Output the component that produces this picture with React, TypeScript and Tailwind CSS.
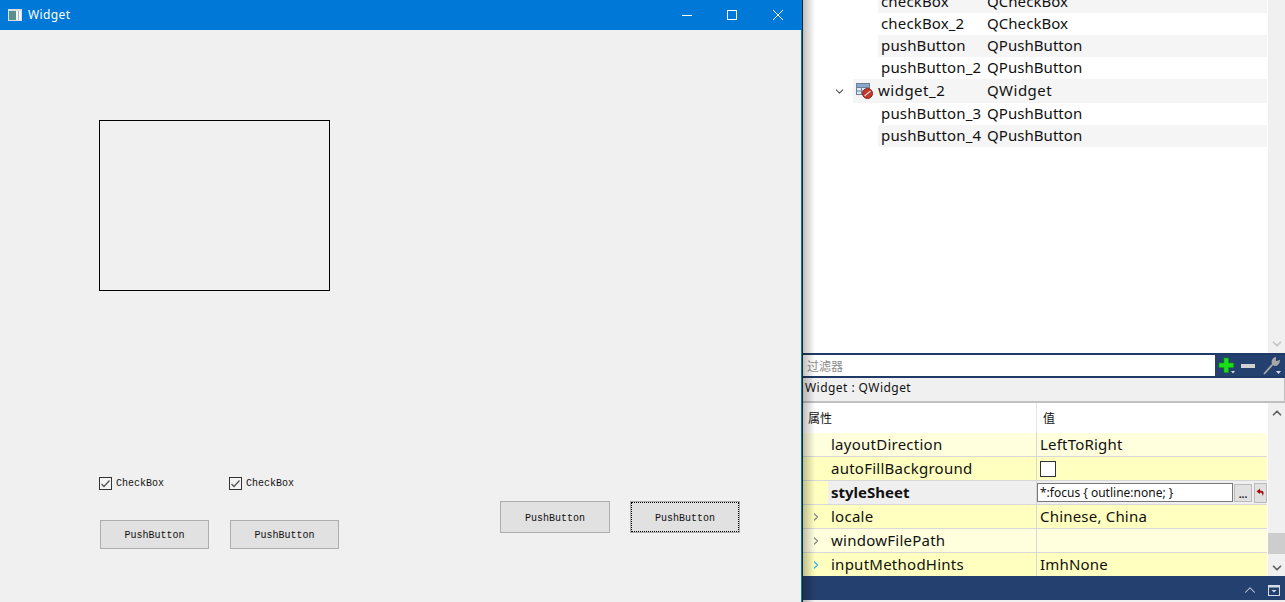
import { ChevronDown, ChevronUp, ChevronRight } from "lucide-react";

const ui = "font-['Noto_Sans','Open_Sans',sans-serif]";
const bitmap = "font-['Liberation_Mono','Noto_Sans_CJK_SC',monospace] text-[10px] text-[#111]";

function AppIcon() {
  return (
    <svg width="14" height="12" viewBox="0 0 14 12">
      <rect x="0" y="0" width="14" height="12" fill="#d9dfe3" />
      <rect x="1" y="2" width="7" height="9" fill="#5b8f8c" />
      <rect x="8" y="2" width="5" height="9" fill="#f4f8fa" />
      <rect x="10" y="2" width="1" height="9" fill="#a8b8bc" />
    </svg>
  );
}

function WindowButtons() {
  return (
    <div className="ml-auto flex">
      <div className="flex h-[30px] w-[46px] items-center justify-center">
        <svg width="10" height="10" viewBox="0 0 10 10" className="ml-[1px]">
          <path d="M0 5.5 H10" stroke="#fff" strokeWidth="1" />
        </svg>
      </div>
      <div className="flex h-[30px] w-[46px] items-center justify-center">
        <svg width="10" height="10" viewBox="0 0 10 10">
          <rect x="0.5" y="0.5" width="9" height="9" fill="none" stroke="#fff" strokeWidth="1" />
        </svg>
      </div>
      <div className="flex h-[30px] w-[46px] items-center justify-center">
        <svg width="10" height="10" viewBox="0 0 10 10">
          <path d="M0 0 L10 10 M10 0 L0 10" stroke="#fff" strokeWidth="1" />
        </svg>
      </div>
    </div>
  );
}

function QtCheck() {
  return (
    <span className="flex h-[13px] w-[13px] items-center justify-center border border-[#333] bg-[#f4f4f4]">
      <svg width="11" height="11" viewBox="0 0 11 11">
        <path d="M1.5 6 L4 8.5 L9.5 2.5" fill="none" stroke="#555" strokeWidth="1.3" />
      </svg>
    </span>
  );
}

function CheckItem() {
  return (
    <div className="flex w-[130px] items-center gap-[4px]">
      <QtCheck />
      <span className={bitmap}>CheckBox</span>
    </div>
  );
}

function PushButton({ focused, tall }: { focused?: boolean; tall?: boolean }) {
  return (
    <button
      className={`flex items-center justify-center border border-[#adadad] bg-[#e1e1e1] ${tall ? "h-[32px] w-[110px]" : "h-[29px] w-[109px]"} ${bitmap}`}
    >
      {focused ? (
        <span className="flex h-full w-full items-center justify-center border border-dotted border-black pt-[2px]">PushButton</span>
      ) : (
        <span className="pt-[2px]">PushButton</span>
      )}
    </button>
  );
}

function WidgetWindow() {
  return (
    <div className="flex h-full w-[802px] shrink-0 flex-col border-r border-[#0078d7] bg-[#f0f0f0]">
      <div className="flex h-[30px] shrink-0 items-center bg-[#0078d7] pl-[8px] text-white">
        <AppIcon />
        <span className="ml-[6px] font-['Noto_Sans',sans-serif] text-[12px] tracking-[0.4px]">Widget</span>
        <WindowButtons />
      </div>
      <div className="flex-1 pl-[99px] pt-[90px]">
        <div className="h-[171px] w-[231px] border border-black" />
        <div className="mt-[185px] flex items-start">
          <div className="flex w-[401px] flex-col">
            <div className="flex">
              <CheckItem />
              <CheckItem />
            </div>
            <div className="mt-[29px] flex gap-[21px] pl-[1px]">
              <PushButton />
              <PushButton />
            </div>
          </div>
          <div className="mt-[25px] flex gap-[20px]">
            <PushButton tall />
            <PushButton tall focused />
          </div>
        </div>
      </div>
    </div>
  );
}

function WidgetIcon() {
  return (
    <svg width="17" height="17" viewBox="0 0 17 17">
      <rect x="0.5" y="1.5" width="13" height="11" fill="#dfe8f2" stroke="#6d8099" />
      <path d="M1 5.5 H13 M1 9 H13 M5.5 2 V12" stroke="#6d8099" />
      <rect x="1" y="2" width="12" height="3" fill="#88a8cc" />
      <circle cx="11.5" cy="11.5" r="5" fill="#c0392b" stroke="#8e1f1a" />
      <path d="M8.5 14 L14.5 9" stroke="#f4d0c8" strokeWidth="1.2" />
    </svg>
  );
}

const treeRows = [
  { name: "checkBox", cls: "QCheckBox", alt: true },
  { name: "checkBox_2", cls: "QCheckBox", alt: false },
  { name: "pushButton", cls: "QPushButton", alt: true },
  { name: "pushButton_2", cls: "QPushButton", alt: false },
];

const treeRows2 = [
  { name: "pushButton_3", cls: "QPushButton", alt: false },
  { name: "pushButton_4", cls: "QPushButton", alt: true },
];

function TreeRow({ name, cls, alt }: { name: string; cls: string; alt: boolean }) {
  return (
    <div className={`ml-[75px] flex h-[22px] items-center pb-[2px] pl-[3px] ${alt ? "bg-[#f5f5f5]" : ""}`}>
      <span className="w-[106px] tracking-[0.15px]">{name}</span>
      <span className="tracking-[0.05px]">{cls}</span>
    </div>
  );
}

function ObjectTree() {
  return (
    <div className="flex h-[353px] shrink-0">
      <div className={`w-[464px] overflow-hidden text-[15px] leading-none text-[#111] ${ui}`}>
        <div className="-mt-[9px]">
          {treeRows.map((r) => <TreeRow key={r.name} {...r} />)}
          <div className="flex h-[24px] items-center">
            <ChevronDown size={13} strokeWidth={2} className="ml-[30px] text-[#555]" />
            <div className="ml-[7px] flex h-full flex-1 items-center bg-[#f5f5f5] pb-[2px] pl-[3px]">
              <WidgetIcon />
              <span className="ml-[5px] w-[109px] tracking-[0.5px]">widget_2</span>
              <span className="tracking-[0.5px]">QWidget</span>
            </div>
          </div>
          {treeRows2.map((r) => <TreeRow key={r.name} {...r} />)}
        </div>
      </div>
      <div className="ml-[1px] flex flex-1 flex-col items-center justify-end bg-[#f0f0f0] pb-[2px]">
        <ChevronDown size={14} strokeWidth={3} className="text-[#c4c4c4]" />
      </div>
    </div>
  );
}

function FilterBar() {
  return (
    <div className="flex h-[25px] shrink-0 border-y-2 border-[#1f3a66] bg-[#24406f]">
      <div className="flex w-[412px] items-center bg-white pl-[4px] font-['Noto_Sans_CJK_SC',sans-serif] text-[12px] text-[#8a8a8a]">过滤器</div>
      <div className="flex flex-1 items-center pl-[3px]">
        <svg width="18" height="18" viewBox="0 0 18 18" className="shrink-0">
          <path d="M6 1 H10.5 V6 H15.5 V10.5 H10.5 V15.5 H6 V10.5 H1 V6 H6 Z" fill="#18e018" stroke="#0c9a0c" strokeWidth="0.6" />
          <path d="M13 14 h4 l-2 2.5 Z" fill="#ddd" />
        </svg>
        <svg width="14" height="18" viewBox="0 0 14 18" className="ml-[5px] shrink-0">
          <rect x="0" y="7" width="14" height="4" fill="#d2d2d2" />
        </svg>
        <svg width="20" height="20" viewBox="0 0 20 20" className="ml-[7px] shrink-0">
          <path d="M2 18 L11 8 M13 2 C10.5 3 10 6 11 8 L13 9 C15 9 17 7 17 5 L14.5 6 L13 5 Z" fill="#a8a8a8" stroke="#a8a8a8" strokeWidth="1.8" />
          <path d="M14 15 h5 l-2.5 3 Z" fill="#ddd" />
        </svg>
      </div>
    </div>
  );
}

const propRows = [
  { name: "layoutDirection", value: "LeftToRight", bg: "bg-[#ffffde]" },
  { name: "autoFillBackground", value: "", bg: "bg-[#ffffbf]", check: true },
];

const propRows2 = [
  { name: "locale", value: "Chinese, China", bg: "bg-[#ffffbf]", arrow: "#888" },
  { name: "windowFilePath", value: "", bg: "bg-[#ffffde]", arrow: "#888" },
  { name: "inputMethodHints", value: "ImhNone", bg: "bg-[#ffffbf]", arrow: "#2bb7e8" },
];

function PropRow({ name, value, bg, arrow, check }: { name: string; value: string; bg: string; arrow?: string; check?: boolean }) {
  return (
    <div className={`flex h-[24px] border-b border-[#d8d8d8] ${bg}`}>
      <div className="flex w-[25px] items-center justify-center">
        {arrow && <ChevronRight size={12} strokeWidth={2.5} style={{ color: arrow }} />}
      </div>
      <div className="flex w-[209px] items-center border-r border-[#d8d8d8] pl-[3px] tracking-[0.25px]">{name}</div>
      <div className="flex flex-1 items-center pl-[3px] tracking-[0.2px]">
        {check ? <span className="h-[16px] w-[16px] border border-[#333] bg-white" /> : value}
      </div>
    </div>
  );
}

function PropertyEditor() {
  return (
    <div className={`flex min-h-0 flex-1 flex-col text-[15px] text-[#111] ${ui}`}>
      <div className="flex h-[25px] shrink-0 items-center border-r border-b-2 border-[#c0c0c0] bg-[#f0f0f0] pb-[4px] pl-[2px] text-[12px] tracking-[0.45px]">Widget : QWidget</div>
      <div className="flex h-[173px] shrink-0">
        <div className="w-[464px] overflow-hidden">
          <div className="flex h-[30px] items-center bg-white font-['Noto_Sans_CJK_SC',sans-serif] text-[12px]">
            <div className="flex h-full w-[234px] items-center border-r border-[#e4e4e4] pl-[5px]">属性</div>
            <div className="pl-[6px]">值</div>
          </div>
          {propRows.map((r) => <PropRow key={r.name} {...r} />)}
          <div className="flex h-[24px] border-b border-[#d8d8d8] bg-[#efefef]">
            <div className="w-[25px] bg-[#ffffbf]" />
            <div className="flex w-[209px] items-center border-r border-[#d8d8d8] pl-[3px] font-bold">styleSheet</div>
            <div className="flex flex-1 items-center gap-[1px]">
              <div className="flex h-[19px] w-[196px] items-center border border-[#777] bg-white pl-[2px] text-[12px]">*:focus {"{"} outline:none; {"}"}</div>
              <div className="flex h-[18px] w-[18px] items-end justify-center border border-[#bbb] bg-[#e1e1e1] text-[10px] leading-[14px] font-bold">...</div>
              <div className="ml-[1px] flex h-[20px] w-[13px] items-center justify-center border border-[#bbb] bg-[#e1e1e1]">
                <svg width="9" height="9" viewBox="0 0 9 9">
                  <path d="M4 0.5 L0.5 3.5 L4 6 V4.5 C6 4.5 6.5 6 6.5 8 C8.5 5.5 8 2.5 4 2.5 Z" fill="#a01010" />
                </svg>
              </div>
            </div>
          </div>
          {propRows2.map((r) => <PropRow key={r.name} {...r} />)}
        </div>
        <div className="ml-[1px] flex flex-1 flex-col items-center bg-[#f0f0f0] pt-[3px] pb-[1px]">
          <ChevronUp size={14} strokeWidth={3} className="text-[#606060]" />
          <div className="mt-auto h-[21px] w-full bg-[#cdcdcd]" />
          <ChevronDown size={14} strokeWidth={3} className="mt-[7px] text-[#606060]" />
        </div>
      </div>
      <div className="flex h-[24px] shrink-0 items-center justify-end gap-[9px] bg-[#24406f] pr-[5px] pt-[4px]">
        <ChevronUp size={18} strokeWidth={1.4} className="text-[#c8d0dc]" />
        <svg width="12" height="11" viewBox="0 0 12 11">
          <rect x="0.5" y="0.5" width="11" height="10" fill="none" stroke="#d6dce6" />
          <rect x="0.5" y="0.5" width="11" height="2" fill="#d6dce6" />
          <path d="M3.5 5 h5 l-2.5 2.5 Z" fill="#d6dce6" />
        </svg>
      </div>
      <div className="flex-1 bg-[#f0f0f0]" />
    </div>
  );
}

export default function App() {
  return (
    <div className="flex h-[602px] w-[1285px] overflow-hidden bg-white">
      <WidgetWindow />
      <div className="relative flex h-full min-w-0 flex-1 flex-col border-l border-[#222]">
        <ObjectTree />
        <FilterBar />
        <PropertyEditor />
        <div className="pointer-events-none absolute inset-y-0 left-0 w-[12px] bg-gradient-to-r from-black/25 to-transparent" />
      </div>
    </div>
  );
}
